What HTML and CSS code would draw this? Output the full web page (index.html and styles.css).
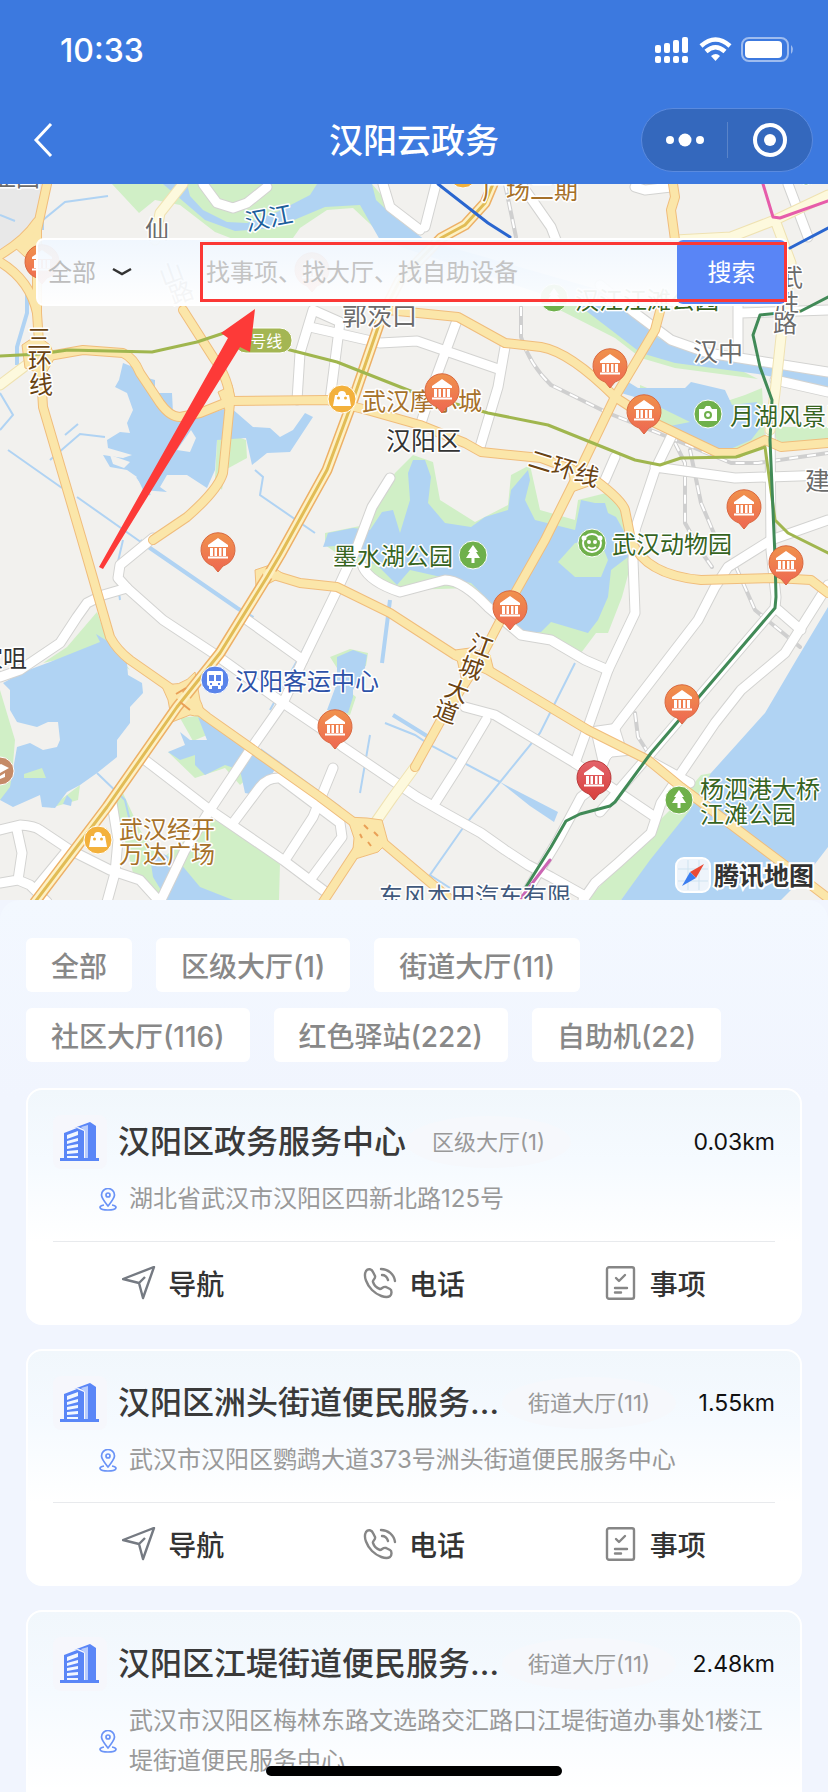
FILE: index.html
```html
<!DOCTYPE html>
<html lang="zh-CN">
<head>
    <meta charset="UTF-8">
    <meta name="viewport" content="width=device-width, initial-scale=1.0">
    <title>汉阳云政务</title>
    <link rel="stylesheet" href="styles.css">
</head>
<body>
    <!-- shared icons -->
    <svg class="sprite" aria-hidden="true">
        <defs>
            <linearGradient id="pin-orange" x1="0" y1="0" x2="0" y2="1">
                <stop offset="0" stop-color="#f0924c"/>
                <stop offset="1" stop-color="#ee6752"/>
            </linearGradient>
            <linearGradient id="pin-red" x1="0" y1="0" x2="0" y2="1">
                <stop offset="0" stop-color="#e3636a"/>
                <stop offset="1" stop-color="#d8403c"/>
            </linearGradient>
            <g id="hall">
                <path d="M0-12 10-5v2h-20v-2zM-8-2h3V6h-3zM-3.500-2h2.500V6h-2.500zM1-2h2.500V6H1zM5-2h3V6H5zM-10 6.500h20v2h-20z" fill="#fff"/>
            </g>
            <g id="pin">
                <path d="M0 22-5 16A17 17 0 1 1 5 16z" fill="url(#pin-orange)" stroke="#d9683f" stroke-width="1"/>
                <use href="#hall"/>
            </g>
            <g id="pin-active">
                <path d="M0 22-5 16A17 17 0 1 1 5 16z" fill="url(#pin-red)" stroke="#b93a3a" stroke-width="1"/>
                <use href="#hall"/>
            </g>
            <g id="poi-tree">
                <circle r="14" fill="#6fb04b" stroke="#fff"/>
                <path d="M0-10 5-3H3L7 3H1.500V8h-3V3H-7l4-6h-2z" fill="#fff"/>
            </g>
            <g id="poi-shop">
                <circle r="14" fill="#f3b13c" stroke="#fff"/>
                <path d="M-7-4h3a4 4 0 0 1 8 0h3L9 7H-9z" fill="#fff"/>
                <circle cx="-3.500" cy="-1" r="1.500" fill="#f3b13c"/>
                <circle cx="3.500" cy="-1" r="1.500" fill="#f3b13c"/>
            </g>
        </defs>
        <symbol id="i-building" viewBox="0 0 40 40">
            <path d="M14 6 30 0l6 4v32h3v3H0v-3h4V11l13-5 7 3v27h2V8l-8-3z" fill="#5a86f7"/>
            <path d="M21 5 28 3v33h-3V9z" fill="#b9cdfd"/>
            <path d="M7 13 18 9v4L7 17zM7 19l11-3v3L7 22zM7 24l11-2v3L7 27zM7 29l11-1v3L7 32zM7 34h11v2H7z" fill="#f2f7ff"/>
        </symbol>
        <symbol id="i-pin" viewBox="0 0 18 23">
            <g fill="none" stroke="#6a93f7" stroke-width="1.700">
                <path d="M9 18C5 13 2.500 10 2.500 7a6.500 6.500 0 0 1 13 0C15.500 10 13 13 9 18z"/>
                <circle cx="9" cy="7" r="2"/>
                <path d="M5 17C-1 18-.5 22 9 22s10-4 4-5"/>
            </g>
        </symbol>
        <symbol id="i-nav" viewBox="0 0 34 34">
            <path d="M1 13 32 1 21 32 17 17zM17 17l6-6" fill="none" stroke="#757a82" stroke-width="2.400" stroke-linejoin="round"/>
        </symbol>
        <symbol id="i-phone" viewBox="0 0 34 34">
            <g fill="none" stroke="#868686" stroke-width="2.400" stroke-linecap="round" stroke-linejoin="round">
                <path d="M3 5C5 2 9 3 10 6l2 4c1 3-3 4-2 6 1 3 4 6 7 7 2 0 3-3 6-2l4 2c2 1 2 5 0 7-4 3-13-1-18-6S0 10 3 5z"/>
                <path d="M19 9c3 0 5 2 6 5M18 3c7 0 13 5 14 12"/>
            </g>
        </symbol>
        <symbol id="i-list" viewBox="0 0 34 34">
            <g fill="none" stroke="#868686" stroke-width="2.400" stroke-linecap="round" stroke-linejoin="round">
                <rect x="3" y="1.200" width="27" height="31.600" rx="2"/>
                <path d="M12 12l3 3 6-6M11 22h12M11 26.500h6"/>
            </g>
        </symbol>
    </svg>

    <div class="app">
        <header class="topbar">
            <div class="status">
                <span class="time">10:33</span>
                <svg class="status-icons" width="140" height="28" viewBox="0 0 140 28" aria-hidden="true">
                    <g fill="#fff">
                        <rect x="0" y="9" width="6" height="8" rx="2"/>
                        <rect x="9" y="7" width="6" height="10" rx="2"/>
                        <rect x="18" y="4" width="6" height="13" rx="2"/>
                        <rect x="27" y="1" width="6" height="16" rx="2"/>
                        <rect x="0" y="20" width="6" height="7" rx="2"/>
                        <rect x="9" y="20" width="6" height="7" rx="2"/>
                        <rect x="18" y="20" width="6" height="7" rx="2"/>
                        <rect x="27" y="20" width="6" height="7" rx="2"/>
                        <path d="M56 20q5-4 9 0l-4.500 5z"/>
                        <rect x="90" y="5" width="37" height="17" rx="4"/>
                    </g>
                    <path d="M46 10q14.500-13 29 0M51 15.500q9.500-8.500 19 0" fill="none" stroke="#fff" stroke-width="4.500"/>
                    <rect x="87" y="2" width="46" height="23" rx="7" fill="none" stroke="#fff" stroke-opacity=".5" stroke-width="2"/>
                    <path d="M136 9q4 4 0 9z" fill="#fff" fill-opacity=".5"/>
                </svg>
            </div>
            <div class="navbar">
                <button class="back" type="button" aria-label="返回">
                    <svg width="20" height="34" viewBox="0 0 20 34"><path d="M18 1 3 17l15 16" fill="none" stroke="#fff" stroke-width="3"/></svg>
                </button>
                <h1>汉阳云政务</h1>
                <div class="capsule">
                    <button type="button" aria-label="更多">
                        <svg width="40" height="16" viewBox="0 0 40 16" fill="#fff"><circle cx="5" cy="8" r="4"/><circle cx="20" cy="8" r="6.500"/><circle cx="35" cy="8" r="4"/></svg>
                    </button>
                    <button type="button" aria-label="关闭">
                        <svg width="36" height="36" viewBox="0 0 36 36"><circle cx="18" cy="18" r="15" fill="none" stroke="#fff" stroke-width="4"/><circle cx="18" cy="18" r="6" fill="#fff"/></svg>
                    </button>
                </div>
            </div>
        </header>

        <section class="map">
            <svg class="map-canvas" viewBox="0 184 828 716" preserveAspectRatio="xMidYMid slice">
                <defs>
                    <g id="white-roads">
                        <path d="M153 538 120 565 118 578 127 588 163 620 213 653 283 703 320 728 343 747 417 797 445 813 481 833 505 850 528 865 551 877 585 896"/>
                        <path d="M127 588 103 595 87 603 77 617 60 643 20 670 0 677"/>
                        <path d="M390 478 372 507 357 547 337 590 303 660 283 703 250 750 210 810 185 850 160 902"/>
                        <path d="M243 617 303 660M145 760 210 810 283 860 327 893"/>
                        <path d="M233 823 260 787Q268 777 280 778L340 823 342 837 310 880M333 768 313 817 287 857"/>
                        <path d="M0 830 20 825Q35 826 40 830L70 850 110 870 140 880 160 902M17 830 22 853 18 880 0 883M18 880 30 885 47 902M65 853 37 887M112 803 118 840 115 873 107 902"/>
                        <path d="M363 567Q370 582 400 592L445 580Q462 580 488 607L521 635 551 640 585 660 608 670"/>
                        <path d="M635 530 633 560 635 613 608 670 588 727 575 763"/>
                        <path d="M465 707 495 715 575 763 655 817M610 745 594 787 581 797 558 840 526 893M486 720 458 767 435 803"/>
                        <path d="M828 520 771 540 728 567 715 587 698 620 621 720 601 747"/>
                        <path d="M828 585 785 653 741 690 715 723 681 773 661 803 651 833 618 863 595 883 583 900"/>
                        <path d="M778 610 801 630M648 760 690 783"/>
                        <path d="M297 400 300 353 313 310 340 322 330 400M310 327 380 343 417 341 501 370M505 347 498 387 480 447M456 323 435 380 421 423"/>
                        <path d="M436 184 425 227M521 184 551 227 556 240M203 184 217 203 233 208 247 203 267 187M383 184 390 207 420 230M788 184 808 237M635 187 645 190 671 187"/>
                        <path d="M600 285 635 313 671 340 708 353 828 372M738 300 738 353M741 313 828 310M775 380 828 392"/>
                        <path d="M671 437 655 470 635 530M615 457 605 480M655 467 735 478 828 475"/>
                        <path d="M770 420 771 550 776 597 775 608 651 753 600 812"/>
                    </g>
                    <g id="pale-roads">
                        <path d="M183 184 160 213 155 240M675 240 731 237 775 220 791 263 781 337 775 393 770 430M775 220 828 195M415 767 393 797 377 820 367 835M0 385 37 357"/>
                    </g>
                    <g id="yellow-roads">
                        <path d="M47 184 37 230 37 313 40 357 43 407 82 540 110 637Q117 650 130 660L173 690 207 717 320 797 360 827 380 840 451 900"/>
                        <path d="M0 255Q25 240 37 222M0 262Q30 280 37 313"/>
                        <path d="M43 357 83 350 123 353Q134 358 140 373L160 403Q170 417 180 417L200 413 230 401 327 400 367 410 420 425 465 443 481 452 541 458 565 467 595 480Q622 500 625 510L631 540Q645 575 701 580L775 578 811 580 828 593"/>
                        <path d="M183 310 213 357Q230 380 230 403L223 473Q218 490 187 517L153 540"/>
                        <path d="M387 310 408 312 458 317 505 343 541 347Q570 352 615 397L655 423 718 453 738 453 765 440 781 447 828 443"/>
                        <path d="M663 300 655 330 615 397 575 480 545 540 511 600 478 663 441 720 415 767M367 835 323 902"/>
                        <path d="M267 573 300 583 337 587 390 613 455 655 488 670 588 730 648 760 681 787 778 860 828 898"/>
                        <path d="M673 184 675 197 671 210 675 240"/>
                    </g>
                    <path id="trunk" d="M493 184 485 203 465 225 441 238 400 280 383 313 353 400 327 470 280 555 267 577 220 653 177 707 107 807 35 902"/>
                </defs>

                <rect class="land" y="184" width="828" height="716"/>
                <path d="M0 184H45L35 218 18 238 0 250z" fill="#e8e8e8"/>

                <!-- parks -->
                <g class="park">
                    <path d="M112 184 139 213 155 200 180 205 215 232 233 239 293 238 300 228 327 210 353 208 385 238 420 240 372 184z"/>
                    <path d="M540 300 615 338 641 358 675 368 758 379 700 350 600 300z"/>
                    <path d="M745 395 762 388 765 440 740 452 715 455 690 445 665 430 640 415 640 385 700 410zM771 427H828V445L781 449z"/>
                    <path d="M217 440 233 435 246 440 247 458 225 470 222 490 215 480z"/>
                    <path d="M325 545 325 533 365 525 375 510 395 473 413 455 433 462 440 500 475 522 508 505 511 475 530 465 540 510 575 520 578 500 610 492 625 510 632 560 622 597 608 633 596 633 581 653 551 640 521 632 488 607 470 588 408 590 375 580z"/>
                    <path d="M43 663 67 647 97 612 107 640 130 670 100 650zM0 690 15 740 10 800 0 800zM80 785 78 800 50 808z"/>
                    <path d="M198 830 213 817 233 830 280 863 279 900H160L133 873 113 793 123 793 140 830 160 860z"/>
                    <path d="M180 718 205 715 207 735 193 741zM168 752 195 778 225 768 240 785 262 765 280 765 240 740zM330 657 350 649 368 653 366 666 337 668zM350 692 356 697 350 715 327 712z"/>
                    <path d="M701 775 712 773 690 812 621 900H588L640 840 680 800z"/>
                </g>

                <!-- rivers and lakes -->
                <g class="water">
                    <path d="M163 184H187L190 196 203 210 227 222 247 223 277 212 310 195 317 184H372L376 200 392 215 425 240 600 290 635 313 658 338 690 350 740 357 828 375V388L758 374 675 363 641 353 615 333 581 307 380 240 360 205 325 207 275 228 235 231 205 220z"/>
                    <path d="M625 380 638 388 685 388 691 382 725 390 732 405 757 402 761 427 751 440 728 450 708 447 665 427 690 422 645 400 621 393z"/>
                    <path d="M123 363 133 367 137 375 155 380 155 393 172 393 173 413 200 417 230 407 253 427 270 428 280 437 293 430 305 413 313 417 290 452 267 453 252 465 246 438 217 440 215 470 207 488 187 475 167 475 160 487 167 492 143 490 137 477 127 470 110 467 103 455 123 458 132 455 108 448 107 440 120 432 130 433 127 423 133 410 127 393 115 387 119 380z"/>
                    <path d="M323 547 328 533 353 528 370 530 382 512 393 510 400 533 410 500 408 473 413 460 425 460 431 477 428 503 445 523 471 527 485 517 508 510 511 490 528 470 530 480 525 500 535 520 575 530 581 500 595 503 605 503 608 513 616 517 625 533 628 557 611 570 608 597 598 620 588 633 551 622 541 632 521 632 471 583 441 577 410 570 397 585 377 565 363 560 345 545z"/>
                    <path d="M3 683 23 672 50 662 100 642 96 634 117 647 127 663 128 675 142 683 143 693 130 707 130 723 117 740 117 757 97 773 80 785 67 792 55 808 42 807 40 795 13 807 0 800 10 787 17 747 30 743 43 750 57 747 60 740 58 722 48 722 37 727 17 722 10 710 10 690z"/>
                    <path d="M198 717 250 745 280 762 268 780 255 795 245 793 240 770 225 765 205 775 195 765 195 755 180 760 168 752 185 745 180 732 190 740 207 740z"/>
                    <path d="M337 657 353 650 367 655 365 668 353 690 353 697 348 713 327 710 337 683z"/>
                    <path d="M150 857 160 852 180 863 200 887 233 900H167L153 877z"/>
                    <path d="M828 607 798 657 765 713 711 773 690 810 650 860 621 900H828z"/>
                    <path d="M500 782 558 812 554 822 530 806zM67 795 72 800 71 806 63 804z"/>
                </g>
                <path class="land" d="M828 847 808 873 781 900H828zM177 450 191 430 196 438 190 452zM110 455 130 462 124 468 113 464z"/>
                <path class="park" d="M575 543 558 562 575 577 601 577 608 560 600 540zM24 774 42 768 46 778 24 778z"/>
                <g class="stream">
                    <path d="M43 230V220L65 202 108 196M0 215 15 221M0 393 13 415 0 430M77 497 145 545M8 450 62 488M50 460 80 434 105 437M65 435 78 424"/>
                    <path d="M137 477 150 495M255 470 263 477 260 495 315 533M123 540 116 570 120 600M97 773 125 800 132 830"/>
                    <path d="M575 663 540 733 465 825 430 875 450 888M385 723 415 735 430 745 500 782M370 735 360 793M317 625 303 650 270 710"/>
                </g>
                <path class="canal" d="M27 290V313L17 347V365M140 541 150 548 237 608 253 618M390 600 382 663M393 715 435 741M260 750 340 808"/>

                <!-- railway lines -->
                <g class="rail">
                    <path d="M521 307V337Q530 365 551 385L608 413 668 437 731 463 758 463 828 453M505 184 516 237M675 443 685 463 685 523 700 550 712 567M690 450 701 503 718 543M736 567 755 610 800 647"/>
                    <path d="M635 713 638 737 651 757"/>
                </g>
                <g class="rail-dash">
                    <path d="M521 307V337Q530 365 551 385L608 413 668 437 731 463 758 463 828 453M505 184 516 237M675 443 685 463 685 523 700 550 712 567M690 450 701 503 718 543M736 567 755 610 800 647"/>
                    <path d="M635 713 638 737 651 757"/>
                </g>

                <!-- roads -->
                <use href="#white-roads" class="road road-case"/>
                <path d="M590 727 618 723 625 745 642 754 612 757 600 770z" fill="#fff" stroke="#d3d3d1"/>
                <use href="#white-roads" class="road road-white"/>
                <use href="#pale-roads" class="road pale-case"/>
                <use href="#pale-roads" class="road road-pale"/>
                <use href="#yellow-roads" class="road yellow-case"/>
                <g class="junction">
                    <path d="M160 682Q180 690 195 672L200 700Q210 720 190 715L172 722 168 700z"/>
                    <path d="M347 817 367 818 382 820 388 842 378 852 352 860 354 838z"/>
                    <path d="M455 650 470 648 490 655 495 675 475 670 462 682z"/>
                    <path d="M255 570 270 565 285 575 268 584 256 587z"/>
                    <path d="M22 345 37 335 50 345 55 357 45 375 25 368zM12 245 37 225 42 245 37 268z"/>
                    <path d="M567 460 580 470 592 485 572 492z"/>
                    <path d="M218 392 232 385 236 402 226 412z"/>
                </g>
                <use href="#trunk" class="road trunk-case"/>
                <use href="#yellow-roads" class="road road-yellow"/>
                <use href="#trunk" class="road trunk-white"/>
                <use href="#trunk" class="road trunk-core"/>
                <path d="M176 694 186 688M180 702 190 710M364 825 368 829M360 834 362 838M374 832 378 836M368 842 371 846" stroke="#e9a057" stroke-width="2"/>

                <!-- metro lines -->
                <g class="metro">
                    <path d="M0 356 40 354 68 350 152 352 197 342 227 332 290 350 337 362 413 392 488 413 548 425 635 460 660 465 681 458 736 457 765 447 775 520 788 533 828 553" stroke="#a0b64e"/>
                    <path d="M828 297 801 311 760 315 753 335 760 367 772 400 770 440 775 557 776 597 775 608 651 753 615 802 610 806 580 814 566 821 551 847 526 887" stroke="#418a57"/>
                    <path d="M550 860 521 898" stroke="#cb66b3"/>
                    <path d="M438 184 488 223 510 237M790 248 828 228" stroke="#2a66cf"/>
                    <path d="M763 184 773 217 780 218 828 201" stroke="#e65caa"/>
                </g>
                <rect x="234" y="328" width="58" height="25" rx="12" fill="#a4b653" stroke="#fff"/>
                <text x="240" y="347" class="line-no">4号线</text>

                <!-- place names -->
                <g class="label">
                    <text transform="translate(247 231) rotate(-11)" fill="#205f9c">汉江</text>
                    <g fill="#6b6b6b">
                        <text x="-8" y="186">亚国</text>
                        <text x="145" y="238">仙</text>
                        <text transform="translate(163 286) rotate(-20)">山</text>
                        <text transform="translate(173 305) rotate(-20)">路</text>
                        <text x="342" y="325" class="town">郭茨口</text>
                        <text x="693" y="361" class="town">汉中</text>
                        <text x="805" y="490" class="town">建</text>
                        <text x="779" y="286">武</text>
                        <text x="775" y="311">胜</text>
                        <text x="773" y="332">路</text>
                    </g>
                    <g fill="#6a4312">
                        <text x="27" y="347">三</text>
                        <text x="28" y="370">环</text>
                        <text x="29" y="393">线</text>
                        <text transform="translate(527 466) rotate(17)">二环线</text>
                        <text transform="translate(467 650) rotate(20)">江</text>
                        <text transform="translate(457 672) rotate(20)">城</text>
                        <text transform="translate(443 695) rotate(20)">大</text>
                        <text transform="translate(432 716) rotate(20)">道</text>
                    </g>
                    <g fill="#a6712a">
                        <text x="482" y="199">广场二期</text>
                        <text x="362" y="410">武汉摩尔城</text>
                        <text x="119" y="838">武汉经开</text>
                        <text x="119" y="863">万达广场</text>
                    </g>
                    <g fill="#36641f">
                        <text x="575" y="309">汉江江滩公园</text>
                        <text x="730" y="425">月湖风景区</text>
                        <text x="612" y="553">武汉动物园</text>
                        <text x="333" y="565">墨水湖公园</text>
                        <text x="700" y="798">杨泗港大桥</text>
                        <text x="700" y="823">江滩公园</text>
                    </g>
                    <text x="386" y="450" class="town" fill="#333">汉阳区</text>
                    <text x="-21" y="667" fill="#333">家咀</text>
                    <text x="235" y="690" fill="#2d52a8">汉阳客运中心</text>
                    <text x="379" y="905" fill="#41597c">东风本田汽车有限</text>
                </g>

                <!-- points of interest -->
                <use href="#poi-tree" x="554" y="298"/>
                <use href="#poi-tree" x="473" y="555"/>
                <use href="#poi-tree" x="679" y="800"/>
                <use href="#poi-tree" x="806" y="171"/>
                <use href="#poi-shop" x="342" y="399"/>
                <use href="#poi-shop" x="98" y="840"/>
                <use href="#poi-shop" x="463" y="174"/>
                <g transform="translate(708 414)">
                    <circle r="14" fill="#6fb04b" stroke="#fff"/>
                    <path d="M-9-5h5l2-3h4l2 3h5V7H-9z" fill="#fff"/>
                    <circle cy="1" r="3" fill="none" stroke="#6fb04b" stroke-width="2"/>
                </g>
                <g transform="translate(592 543)">
                    <circle r="14" fill="#6fb04b" stroke="#fff"/>
                    <circle r="9" fill="none" stroke="#fff" stroke-width="2"/>
                    <circle cx="-8" cy="-5" r="2.500" fill="#fff"/><circle cx="8" cy="-5" r="2.500" fill="#fff"/>
                    <circle cx="-3" cy="-1" r="2" fill="#fff"/><circle cx="3" cy="-1" r="2" fill="#fff"/>
                    <path d="M-4 4q4 3 8 0" fill="none" stroke="#fff" stroke-width="2"/>
                </g>
                <g transform="translate(215 680)">
                    <circle r="14" fill="#5a84ea" stroke="#fff"/>
                    <rect x="-8" y="-9" width="16" height="15" rx="2" fill="#fff"/>
                    <path d="M-6-5h5v6h-5zM1-5h5v6H1zM-5 3h2v2h-2zM3 3h2v2H3z" fill="#5a84ea"/>
                    <path d="M-6 6h3v3h-3zM3 6h3v3H3z" fill="#fff"/>
                </g>
                <g transform="translate(0 771)">
                    <circle r="14" fill="#c58b68" stroke="#fff"/>
                    <path d="M-8-2 1-7 9-3 0 2zM-5 2 0 5 5 2V6L0 8z" fill="#fff"/>
                </g>

                <use href="#pin" x="42" y="262"/>
                <use href="#pin" x="312" y="270"/>
                <use href="#pin" x="610" y="366"/>
                <use href="#pin" x="644" y="412"/>
                <use href="#pin" x="442" y="391"/>
                <use href="#pin" x="744" y="507"/>
                <use href="#pin" x="218" y="550"/>
                <use href="#pin" x="786" y="563"/>
                <use href="#pin" x="510" y="608"/>
                <use href="#pin" x="682" y="702"/>
                <use href="#pin" x="335" y="727"/>
                <use href="#pin-active" x="594" y="778"/>

                <!-- map provider mark -->
                <g transform="translate(676 858)">
                    <rect width="34" height="34" rx="8" fill="#eef4fb" stroke="#fff" stroke-width="2"/>
                    <path d="M12 2v30M23 2v30M2 11h30M2 23h30" stroke="#cfe3f0"/>
                    <path d="M28 6 20 20 14 14z" fill="#ea4a35"/>
                    <path d="M6 28 14 14 20 20z" fill="#3a7df0"/>
                </g>
                <text x="714" y="885" class="brand">腾讯地图</text>

                <path d="M255 309 221 333 228 338 99 567 103 569 240 347 250 352z" fill="#fd3a38"/>
            </svg>

            <form class="search">
                <label class="sr-only" for="kind">类型</label>
                <select id="kind" class="search-kind">
                    <option>全部</option>
                </select>
                <label class="sr-only" for="keyword">关键字</label>
                <input id="keyword" class="search-input" type="text" placeholder="找事项、找大厅、找自助设备">
                <button class="search-btn" type="button">搜索</button>
                <span class="search-mark"></span>
            </form>
        </section>

        <main class="panel">
            <div class="chips">
                <button type="button">全部</button>
                <button type="button">区级大厅(1)</button>
                <button type="button">街道大厅(11)</button>
                <button type="button">社区大厅(116)</button>
                <button type="button">红色驿站(222)</button>
                <button type="button">自助机(22)</button>
            </div>

            <article class="card">
                <div class="card-head">
                    <span class="card-icon"><svg width="40" height="40"><use href="#i-building"/></svg></span>
                    <h2>汉阳区政务服务中心</h2>
                    <span class="tag">区级大厅(1)</span>
                    <span class="distance">0.03km</span>
                </div>
                <div class="address">
                    <svg width="18" height="23"><use href="#i-pin"/></svg>
                    <p>湖北省武汉市汉阳区四新北路125号</p>
                </div>
                <div class="actions">
                    <button type="button"><svg width="34" height="34"><use href="#i-nav"/></svg>导航</button>
                    <button type="button"><svg width="34" height="34"><use href="#i-phone"/></svg>电话</button>
                    <button type="button"><svg width="34" height="34"><use href="#i-list"/></svg>事项</button>
                </div>
            </article>

            <article class="card">
                <div class="card-head">
                    <span class="card-icon"><svg width="40" height="40"><use href="#i-building"/></svg></span>
                    <h2>汉阳区洲头街道便民服务中心</h2>
                    <span class="tag">街道大厅(11)</span>
                    <span class="distance">1.55km</span>
                </div>
                <div class="address">
                    <svg width="18" height="23"><use href="#i-pin"/></svg>
                    <p>武汉市汉阳区鹦鹉大道373号洲头街道便民服务中心</p>
                </div>
                <div class="actions">
                    <button type="button"><svg width="34" height="34"><use href="#i-nav"/></svg>导航</button>
                    <button type="button"><svg width="34" height="34"><use href="#i-phone"/></svg>电话</button>
                    <button type="button"><svg width="34" height="34"><use href="#i-list"/></svg>事项</button>
                </div>
            </article>

            <article class="card">
                <div class="card-head">
                    <span class="card-icon"><svg width="40" height="40"><use href="#i-building"/></svg></span>
                    <h2>汉阳区江堤街道便民服务中心</h2>
                    <span class="tag">街道大厅(11)</span>
                    <span class="distance">2.48km</span>
                </div>
                <div class="address">
                    <svg width="18" height="23"><use href="#i-pin"/></svg>
                    <p>武汉市汉阳区梅林东路文选路交汇路口江堤街道办事处1楼江堤街道便民服务中心</p>
                </div>
                <div class="actions">
                    <button type="button"><svg width="34" height="34"><use href="#i-nav"/></svg>导航</button>
                    <button type="button"><svg width="34" height="34"><use href="#i-phone"/></svg>电话</button>
                    <button type="button"><svg width="34" height="34"><use href="#i-list"/></svg>事项</button>
                </div>
            </article>
        </main>
        <div class="home-bar"></div>
    </div>
</body>
</html>
```
FILE: styles.css
```css
* {
    box-sizing: border-box;
}
body {
    margin: 0;
    font-family: Inter, "Noto Sans CJK SC", sans-serif;
    background-color: #f1f5fe;
    color: #333;
}
button, input, select {
    font: inherit;
    border: none;
    padding: 0;
    background: none;
    cursor: pointer;
}
.sprite {
    position: absolute;
    width: 0;
    height: 0;
}
.sr-only {
    position: absolute;
    width: 1px;
    height: 1px;
    overflow: hidden;
    clip-path: inset(50%);
}
.app {
    position: relative;
    display: flex;
    flex-direction: column;
    height: 100vh;
    overflow: hidden;
}

/* header */
.topbar {
    flex: none;
    background-color: #3c79df;
    color: #fff;
}
.status {
    display: flex;
    align-items: center;
    justify-content: space-between;
    height: 96px;
    padding: 4px 33px 0 60px;
}
.time {
    font-size: 32px;
    font-weight: 500;
}
.navbar {
    display: grid;
    grid-template-columns: 1fr auto 1fr;
    align-items: center;
    height: 88px;
    padding: 0 15px;
}
.navbar h1 {
    margin: 0;
    padding-bottom: 4px;
    font-size: 34px;
    font-weight: 500;
}
.back {
    justify-self: start;
    display: flex;
    margin-left: 18px;
}
.capsule {
    justify-self: end;
    display: grid;
    grid-template-columns: 1fr 1fr;
    width: 172px;
    height: 64px;
    align-items: center;
    border: 1px solid #5a8ade;
    border-radius: 32px;
    background-color: #3468bd;
}
.capsule button {
    display: flex;
    align-items: center;
    justify-content: center;
    height: 36px;
}
.capsule button + button {
    border-left: 1px solid #5a84c9;
}

/* map */
.map {
    flex: none;
    position: relative;
    aspect-ratio: 828 / 716;
    overflow: hidden;
}
.map-canvas {
    display: block;
    width: 100%;
    height: 100%;
}
.land {
    fill: #f2f1ee;
}
.park {
    fill: #d0efc6;
}
.water {
    fill: #b0d3f3;
}
.stream, .canal {
    fill: none;
    stroke: #b0d3f3;
    stroke-width: 2;
}
.canal {
    stroke-width: 4;
}
.road, .rail, .rail-dash, .metro {
    fill: none;
    stroke-linecap: round;
    stroke-linejoin: round;
}
.rail {
    stroke: #cfcfcf;
    stroke-width: 4;
}
.rail-dash {
    stroke: #fff;
    stroke-width: 2;
    stroke-linecap: butt;
    stroke-dasharray: 9 9;
}
.road-case {
    stroke: #d3d3d1;
    stroke-width: 11;
}
.road-white {
    stroke: #fff;
    stroke-width: 9;
}
.pale-case {
    stroke: #efe2b2;
    stroke-width: 11;
}
.road-pale {
    stroke: #fdf9dd;
    stroke-width: 9;
}
.yellow-case {
    stroke: #f0bd7c;
    stroke-width: 10;
}
.road-yellow {
    stroke: #fbe6a9;
    stroke-width: 8;
}
.junction {
    fill: #fbe6a9;
    stroke: #f0bd7c;
}
.trunk-case {
    stroke: #edb066;
    stroke-width: 11;
}
.trunk-white {
    stroke: #fdf1c4;
    stroke-width: 8;
}
.trunk-core {
    stroke: #e2bc55;
    stroke-width: 3;
}
.metro {
    stroke-width: 3;
}
.line-no {
    font-size: 16px;
    fill: #fff;
}
.label {
    font-size: 24px;
    paint-order: stroke;
    stroke: #fff;
    stroke-width: 3;
    stroke-linejoin: round;
}
.town {
    font-size: 25px;
}
.brand {
    font-size: 25px;
    font-weight: 700;
    fill: #333;
    paint-order: stroke;
    stroke: #fff;
    stroke-width: 4;
}

/* search box over the map */
.search {
    position: absolute;
    top: 54px;
    left: 36px;
    right: 40px;
    height: 68px;
    display: flex;
    align-items: center;
    border: 2px solid #fff;
    border-radius: 8px;
    background: linear-gradient(rgba(240, 247, 255, 0.94), rgba(255, 255, 255, 0.94));
    font-size: 24px;
}
.search-kind {
    appearance: none;
    width: 168px;
    height: 100%;
    padding-left: 10px;
    color: #bdbdbd;
    background: url("data:image/svg+xml,%3Csvg xmlns='http://www.w3.org/2000/svg' width='20' height='10'%3E%3Cpath d='M1 2l9 5 9-5' fill='none' stroke='%23333' stroke-width='2.500'/%3E%3C/svg%3E") no-repeat 74px center;
}
.search-input {
    flex: 1;
    min-width: 0;
    height: 100%;
    outline: none;
}
.search-input::placeholder {
    color: #c4c4c4;
    opacity: 1;
}
.search-btn {
    width: 109px;
    height: 64px;
    padding-bottom: 4px;
    border-radius: 6px;
    background-color: #5985f6;
    color: #fff;
}
.search-mark {
    position: absolute;
    top: 2px;
    bottom: 2px;
    left: 162px;
    right: -1px;
    border: 3px solid #fb3836;
    pointer-events: none;
}

/* list */
.panel {
    flex: 1;
    min-height: 0;
    overflow-y: auto;
    scrollbar-width: none;
    padding: 38px 26px 24px;
    border-radius: 20px 20px 0 0;
    background: linear-gradient(#f3f8ff, #f1f5fe 200px);
}
.chips {
    display: flex;
    flex-wrap: wrap;
    gap: 16px 24px;
    margin-bottom: 26px;
}
.chips button {
    height: 54px;
    padding: 0 25px;
    border-radius: 6px;
    background-color: #fff;
    color: #888;
    font-size: 28px;
    font-weight: 500;
}
.card {
    padding: 25px 25px 0;
    margin-bottom: 24px;
    border: 2px solid #fff;
    border-radius: 16px;
    background: linear-gradient(#f1f7fc, #f5faff 30%, #fff 65%);
}
.card-head {
    display: flex;
    align-items: center;
    height: 54px;
}
.card-icon {
    display: flex;
    align-items: center;
    justify-content: center;
    width: 54px;
    height: 54px;
    margin-right: 11px;
    border-radius: 8px;
    background-color: #f6f7fc;
}
.card h2 {
    margin: 0;
    padding-bottom: 6px;
    max-width: 384px;
    overflow: hidden;
    white-space: nowrap;
    text-overflow: ellipsis;
    font-size: 32px;
    font-weight: 500;
    color: #3a3a3a;
}
.tag {
    flex: none;
    padding: 0 26px;
    line-height: 52px;
    border-radius: 50%;
    background-color: #f6f8fc;
    color: #999;
    font-size: 22px;
}
.distance {
    margin-left: auto;
    font-size: 23px;
    color: #111;
}
.address {
    display: flex;
    align-items: center;
    gap: 12px;
    margin-top: 10px;
    padding: 0 0 22px 46px;
}
.address svg {
    flex: none;
}
.address p {
    margin: 0;
    font-size: 24px;
    line-height: 40px;
    color: #999;
}
.actions {
    display: grid;
    grid-template-columns: repeat(3, 1fr);
    border-top: 1px solid #e8eaed;
}
.actions button {
    display: flex;
    align-items: center;
    justify-content: center;
    gap: 12px;
    height: 81px;
    font-size: 28px;
    font-weight: 500;
    color: #333;
}
.home-bar {
    position: absolute;
    bottom: 16px;
    left: 50%;
    width: 296px;
    height: 10px;
    margin-left: -148px;
    border-radius: 5px;
    background-color: #000;
}
```
